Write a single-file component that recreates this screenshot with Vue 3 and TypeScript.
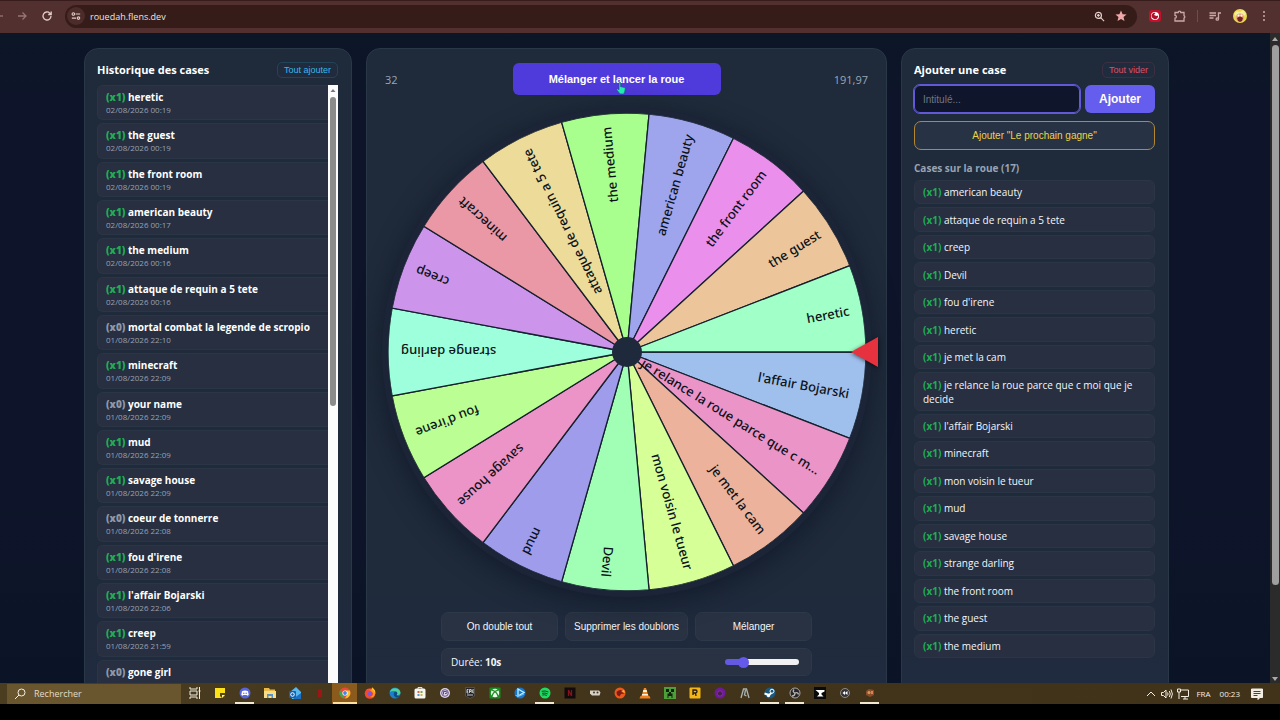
<script setup lang="ts">
import { computed, ref } from 'vue'

interface HistoryEntry { count: number; name: string; date: string }
interface Slice { label: string; color: string }
interface TaskApp { id: string; open?: boolean; active?: boolean }

const history: HistoryEntry[] = [
  { count: 1, name: 'heretic', date: '02/08/2026 00:19' },
  { count: 1, name: 'the guest', date: '02/08/2026 00:19' },
  { count: 1, name: 'the front room', date: '02/08/2026 00:19' },
  { count: 1, name: 'american beauty', date: '02/08/2026 00:17' },
  { count: 1, name: 'the medium', date: '02/08/2026 00:16' },
  { count: 1, name: 'attaque de requin a 5 tete', date: '02/08/2026 00:16' },
  { count: 0, name: 'mortal combat la legende de scropio', date: '01/08/2026 22:10' },
  { count: 1, name: 'minecraft', date: '01/08/2026 22:09' },
  { count: 0, name: 'your name', date: '01/08/2026 22:09' },
  { count: 1, name: 'mud', date: '01/08/2026 22:09' },
  { count: 1, name: 'savage house', date: '01/08/2026 22:09' },
  { count: 0, name: 'coeur de tonnerre', date: '01/08/2026 22:08' },
  { count: 1, name: "fou d'irene", date: '01/08/2026 22:08' },
  { count: 1, name: "l'affair Bojarski", date: '01/08/2026 22:06' },
  { count: 1, name: 'creep', date: '01/08/2026 21:59' },
  { count: 0, name: 'gone girl', date: '29/07/2026 02:24' },
]

const cases: string[] = [
  'american beauty', 'attaque de requin a 5 tete', 'creep', 'Devil', "fou d'irene", 'heretic',
  'je met la cam', 'je relance la roue parce que c moi que je decide', "l'affair Bojarski",
  'minecraft', 'mon voisin le tueur', 'mud', 'savage house', 'strange darling',
  'the front room', 'the guest', 'the medium',
]

const slices: Slice[] = [
  { label: "l'affair Bojarski", color: '#9fbfec' },
  { label: 'je relance la roue parce que c m...', color: '#eb94c8' },
  { label: 'je met la cam', color: '#ecb29b' },
  { label: 'mon voisin le tueur', color: '#d6ff97' },
  { label: 'Devil', color: '#a1ffb5' },
  { label: 'mud', color: '#9f9cec' },
  { label: 'savage house', color: '#ec94c8' },
  { label: "fou d'irene", color: '#bbff94' },
  { label: 'strange darling', color: '#9dffdc' },
  { label: 'creep', color: '#cd94ec' },
  { label: 'minecraft', color: '#ea97a6' },
  { label: 'attaque de requin a 5 tete', color: '#eddb9a' },
  { label: 'the medium', color: '#a9ff8d' },
  { label: 'american beauty', color: '#9ea5ec' },
  { label: 'the front room', color: '#ea8fec' },
  { label: 'the guest', color: '#ecc59b' },
  { label: 'heretic', color: '#a1ffc8' },
]

const R = 239
const step = 360 / slices.length
const point = (deg: number): string => {
  const a = (deg * Math.PI) / 180
  return `${(R * Math.cos(a)).toFixed(2)} ${(R * Math.sin(a)).toFixed(2)}`
}
const wheel = slices.map((s, i) => ({
  ...s,
  d: `M0 0L${point(i * step)}A${R} ${R} 0 0 1 ${point((i + 1) * step)}Z`,
  turn: `rotate(${((i + 0.5) * step).toFixed(2)})`,
}))

const title = ref('')
const duration = ref(10)
const fill = computed(() => `${((duration.value - 5) / 25) * 100}%`)

const apps: TaskApp[] = [
  { id: 'taskview' }, { id: 'notes' }, { id: 'discord', open: true }, { id: 'explorer' },
  { id: 'outlook' }, { id: 'redapp' }, { id: 'chrome', open: true, active: true },
  { id: 'firefox' }, { id: 'edge' }, { id: 'store' }, { id: 'swirl' }, { id: 'epic' },
  { id: 'xbox' }, { id: 'bnet' }, { id: 'spotify', open: true }, { id: 'netflix' },
  { id: 'goggles' }, { id: 'orange' }, { id: 'vlc' }, { id: 'creeper' }, { id: 'rockstar' },
  { id: 'purple' }, { id: 'ark' }, { id: 'steam', open: true }, { id: 'obs', open: true },
  { id: 'anvil' }, { id: 'rewind' }, { id: 'paint', open: true },
]
</script>

<template>
  <div class="screen">
    <header class="browser">
      <svg class="ic nav dim" viewBox="0 0 12 12" aria-hidden="true"><path d="M-4 6h7" /></svg>
      <svg class="ic nav dim fwd" viewBox="0 0 12 12" aria-hidden="true"><path d="M2 6h8M6.500 2.500 10 6 6.500 9.500" /></svg>
      <svg class="ic nav reload" viewBox="0 0 12 12" aria-hidden="true"><path d="M10 6a4 4 0 1 1-1.200-2.900L10 4.300M10.200 1.500v3H7.200" /></svg>
      <div class="omnibox">
        <span class="site"><svg class="ic" viewBox="0 0 12 12" aria-hidden="true"><path d="M5.500 3.500H11M1 8.500h5" /><circle cx="2.800" cy="3.500" r="1.500" /><circle cx="9" cy="8.500" r="1.500" /></svg></span>
        <span class="url">rouedah.flens.dev</span>
        <svg class="ic zoomic" viewBox="0 0 12 12" aria-hidden="true"><circle cx="4.800" cy="4.800" r="3.300" /><path d="M7.300 7.300 11 11M3.300 4.800h3M4.800 3.300v3" /></svg>
        <svg class="ic star" viewBox="0 0 12 12" aria-hidden="true"><path d="M6 .5 7.600 4.200l4 .3-3.100 2.600 1 4L6 9 2.500 11.100l1-4L.4 4.500l4-.3Z" /></svg>
      </div>
      <svg class="ic ext" viewBox="0 0 12 12" aria-hidden="true"><rect width="12" height="12" rx="3" fill="#c3102c" stroke="none" /><circle cx="6" cy="6" r="4" fill="#fff" stroke="none" /><path d="M3 7.500A3 3 0 0 1 6.500 3L5 5l2.500 1L9 5.500A3 3 0 0 1 5 9Z" fill="#b01028" stroke="none" /></svg>
      <svg class="ic puzzle" viewBox="0 0 12 12" aria-hidden="true"><path d="M1 2.500h3.200a1.300 1.300 0 0 1 2.600 0H10v3.200a1.300 1.300 0 0 1 0 2.400V11H1V8.200a1.400 1.400 0 0 0 0-2.800Z" /></svg>
      <span class="sep"></span>
      <svg class="ic media" viewBox="0 0 12 12" aria-hidden="true"><path d="M.5 3h6.500M.5 5.500h6.500M.5 8h4M9.500 9V3H12" /><circle cx="8.300" cy="9" r="1.200" /></svg>
      <svg class="avatar" viewBox="0 0 14 14" aria-hidden="true"><circle cx="7" cy="7" r="7" fill="#ecd94e" /><path d="M1 5 4 2l3 1 3-2 3 4-2 2H3Z" fill="#f5f09b" /><circle cx="7" cy="8.500" r="4" fill="#e5a183" /><path d="M4 9q3-3 6 0l-1 3-2 1-2-1Z" fill="#722220" /><circle cx="5.500" cy="6.500" r="1" fill="#fff" /><circle cx="8.500" cy="6.500" r="1" fill="#fff" /></svg>
      <svg class="kebab" viewBox="0 0 4 12" aria-hidden="true"><circle cx="2" cy="2" r="1" /><circle cx="2" cy="6" r="1" /><circle cx="2" cy="10" r="1" /></svg>
    </header>

    <div class="viewport">
      <main class="page">
        <section class="panel side">
          <div class="head">
            <h2>Historique des cases</h2>
            <button class="mini blue" type="button">Tout ajouter</button>
          </div>
          <div class="history">
            <ul>
              <li v-for="h in history" :key="h.name">
                <span class="name"><b :class="h.count ? 'on' : 'off'">(x{{ h.count }})</b> {{ h.name }}</span>
                <span class="date">{{ h.date }}</span>
              </li>
            </ul>
            <div class="bar light"><svg viewBox="0 0 10 10" aria-hidden="true"><path d="M5 4 7.500 7h-5Z" /></svg><i></i></div>
          </div>
        </section>

        <section class="panel center">
          <div class="top">
            <span>32</span>
            <button class="spin" type="button">Mélanger et lancer la roue
              <svg class="hand" viewBox="0 0 11 14" aria-hidden="true"><path d="M3.500.5Q4.800 0 5 1v4.500l4.300 1q1 .3.900 1.500L9.500 11 8.500 13.500h-4L1 9.300Q.2 8 1.300 7.700L3.300 9Z" /></svg>
            </button>
            <span>191,97</span>
          </div>
          <div class="wheelbox">
            <svg class="wheel" viewBox="-239 -239 478 478" role="img" aria-label="Roue">
              <path v-for="s in wheel" :key="s.label" :d="s.d" :fill="s.color" class="slice" />
              <text v-for="s in wheel" :key="s.label" :transform="s.turn" x="226" y="5" text-anchor="end">{{ s.label }}</text>
              <circle r="15" class="hub" />
            </svg>
            <svg class="pointer" viewBox="0 0 27 30" aria-hidden="true"><path d="M0 15 27 0v30Z" /></svg>
          </div>
          <div class="controls">
            <div class="row">
              <button type="button">On double tout</button>
              <button type="button">Supprimer les doublons</button>
              <button type="button">Mélanger</button>
            </div>
            <div class="duration">
              <label for="duration">Durée: <b>{{ duration }}s</b></label>
              <input id="duration" v-model.number="duration" type="range" min="5" max="30" :style="{ '--fill': fill }" />
            </div>
          </div>
        </section>

        <section class="panel side">
          <div class="head">
            <h2>Ajouter une case</h2>
            <button class="mini red" type="button">Tout vider</button>
          </div>
          <form class="add" @submit.prevent>
            <input v-model="title" type="text" aria-label="Intitulé" placeholder="Intitulé..." />
            <button type="submit">Ajouter</button>
          </form>
          <button class="next" type="button">Ajouter "Le prochain gagne"</button>
          <h3>Cases sur la roue (17)</h3>
          <ul class="cases">
            <li v-for="c in cases" :key="c"><span><b class="on">(x1)</b> {{ c }}</span></li>
          </ul>
        </section>
      </main>
      <div class="bar dark"><svg viewBox="0 0 10 10" aria-hidden="true"><path d="M5 4 8 8H2Z" /></svg><i></i><svg viewBox="0 0 10 10" aria-hidden="true"><path d="M5 8 8 4H2Z" /></svg></div>
    </div>

    <footer class="taskbar">
      <label class="search">
        <svg viewBox="0 0 12 12" aria-hidden="true"><circle cx="7.500" cy="4.500" r="3.500" /><path d="M5 7 1 11" /></svg>
        <input type="text" aria-label="Rechercher" placeholder="Rechercher" />
      </label>
      <div class="apps">
        <span v-for="a in apps" :key="a.id" class="app" :class="{ open: a.open, active: a.active }">
          <svg viewBox="0 0 12 12" aria-hidden="true">
            <g v-if="a.id === 'taskview'" fill="none" stroke="#f1ecdf"><path d="M1 0v2h7V0M1 12v-2h7v2M1 4h7v4H1ZM10.500 0v12M9.500 4h2" /></g>
            <g v-else-if="a.id === 'notes'"><path d="M1 1h10v10H1Z" fill="#fbe116" /><path d="M6 6h5v5H8L6 9Z" fill="#564813" /><path d="M8 11V8h3Z" fill="#fff38a" /></g>
            <g v-else-if="a.id === 'discord'"><circle cx="6" cy="6" r="5.500" fill="#5865dc" /><path d="M3 4.200Q6 3 9 4.200L9.700 8 8.300 8.800 7.500 8h-3l-.8.8L2.300 8Z" fill="#fff" /><circle cx="4.800" cy="6.300" r=".7" fill="#5865dc" /><circle cx="7.200" cy="6.300" r=".7" fill="#5865dc" /></g>
            <g v-else-if="a.id === 'explorer'"><path d="M0 1h5l1 1.500h5V11H0Z" fill="#e9b94a" /><path d="M0 4h12v7H0Z" fill="#f8dc88" /><path d="M3 11V7h6v4H7.500V9h-3v2Z" fill="#5593c8" /></g>
            <g v-else-if="a.id === 'outlook'"><path d="M1 5 7 0l5 5v7H3Z" fill="#58b7ee" /><path d="M4 12 12 6v6Z" fill="#1d6fc4" /><rect y="4" width="7" height="7" rx="1" fill="#1162b5" /><circle cx="3.500" cy="7.500" r="1.800" fill="none" stroke="#fff" /></g>
            <path v-else-if="a.id === 'redapp'" d="M4 2.500 8 2v8H4Z" fill="#9c1713" />
            <g v-else-if="a.id === 'chrome'"><circle cx="6" cy="6" r="5.500" fill="#e8493a" /><path d="M1.200 3.300 4 8l2 3.500A5.500 5.500 0 0 1 1.200 3.300Z" fill="#37a853" /><path d="M6 3.500h4.800A5.500 5.500 0 0 1 6 11.500L8 8Z" fill="#f9c32c" /><circle cx="6" cy="6" r="2.600" fill="#fff" /><circle cx="6" cy="6" r="1.900" fill="#4285e8" /></g>
            <g v-else-if="a.id === 'firefox'"><circle cx="6" cy="6.500" r="5.300" fill="#f3472f" /><path d="M8 .3Q12 3 11.300 7 10 4 7.500 3.500Z" fill="#ffc530" /><path d="M2 3Q6 2 9 6 9.500 9 6 10 11 11 11 6 10 3 8 2.500Z" fill="#ff9722" /><circle cx="6" cy="6.800" r="2.200" fill="#8055db" /></g>
            <g v-else-if="a.id === 'edge'"><circle cx="6" cy="6" r="5.500" fill="#1b80cc" /><path d="M.8 5A5.500 5.500 0 0 1 11.500 6Q11 8.500 8 8 8 4 5 4 2.500 4 .8 5Z" fill="#4fd29a" /><path d="M7 4.500Q9.500 6 7.500 8 9 9.500 11 8.500 8 13 5 8.500 4 5 7 4.500Z" fill="#104a84" /></g>
            <g v-else-if="a.id === 'store'"><path d="M4 2V.5h4V2" fill="none" stroke="#ddd" /><rect x=".5" y="1.500" width="11" height="10" rx="1.500" fill="#f5f5f2" /><path d="M3.500 4h2v2h-2Z" fill="#df6147" /><path d="M6.500 4h2v2h-2Z" fill="#78a942" /><path d="M3.500 7h2v2h-2Z" fill="#4a9cd2" /><path d="M6.500 7h2v2h-2Z" fill="#e3ae38" /></g>
            <g v-else-if="a.id === 'swirl'"><circle cx="6" cy="6" r="5" fill="#ddd3e9" /><circle cx="6" cy="6" r="3.300" fill="none" stroke="#65598c" /><path d="M4.500 7.500V4.500H7a1 1 0 0 1 0 2H6" fill="none" stroke="#674477" /></g>
            <g v-else-if="a.id === 'epic'"><path d="M1.500.5h9V9L6 11.500 1.500 9Z" fill="#242327" stroke="#77706d" stroke-width=".5" /><path d="M3 2.500v3.500M3 2.500h1.500M3 4.200h1.200M3 6h1.500M5.500 6V2.500H7v2H5.500M8 2.500V6M9.500 2.500H9V6h.7M3 8h6" fill="none" stroke="#eee" stroke-width=".8" /></g>
            <g v-else-if="a.id === 'xbox'"><rect x=".5" y=".5" width="11" height="11" rx="1" fill="#168b22" /><circle cx="6" cy="6" r="4.200" fill="#eef7ea" /><path d="M3 9Q4 6 6 4.500 8 6 9 9M3 3l3 1.500L9 3" fill="none" stroke="#168b22" stroke-width="1.200" /></g>
            <g v-else-if="a.id === 'bnet'"><circle cx="6" cy="6" r="5.500" fill="#1877cc" /><path d="M4 2 10 5.500 4 9Z" fill="none" stroke="#bbf4ff" stroke-width="1.300" /><path d="M1.500 8.500Q6 10 10 7" fill="none" stroke="#6bc6f7" /></g>
            <g v-else-if="a.id === 'spotify'"><circle cx="6" cy="6" r="5.500" fill="#1edc62" /><path d="M2.700 4.300q3.500-1 6.700.7M3 6.300q3-.8 5.700.6M3.300 8q2.500-.6 4.600.5" fill="none" stroke="#174625" /></g>
            <g v-else-if="a.id === 'netflix'"><path d="M.5.5h11v11H.5Z" fill="#120b0b" /><path d="M4.500 9V3l3 6V3" fill="none" stroke="#84131d" stroke-width="1.300" /></g>
            <g v-else-if="a.id === 'goggles'"><path d="M1 3.500h9l1.500 2-1 3H3L1 6.500Z" fill="#d6d0c5" /><circle cx="5" cy="5.500" r="1" fill="#403a36" /><circle cx="8.500" cy="5.500" r="1" fill="#403a36" /></g>
            <g v-else-if="a.id === 'orange'"><circle cx="6" cy="6" r="5.500" fill="#ed591c" /><path d="M2.500 5Q6 1.500 9.500 4L7.500 5l3 1.500-3.500.5L5.500 9.500 3 8Z" fill="#7e1d18" /><path d="M7 4l3-1 1 3Z" fill="#ffb432" /></g>
            <g v-else-if="a.id === 'vlc'"><path d="M5 1h2l2.500 8h-7Z" fill="#f48a25" /><path d="M4.400 3h3.200l.6 2H3.800ZM3.300 7h5.400l.5 1.500H2.800Z" fill="#fff2dc" /><path d="M1.500 9h9l1 2.500H.5Z" fill="#ef801d" /></g>
            <g v-else-if="a.id === 'creeper'"><path d="M0 0h12v12H0Z" fill="#4c9f3a" /><path d="M2 2h3v3H2ZM7 2h3v3H7ZM5 5h2v1.500h1.500V11H7.500V9h-3v2h-1V6.500H5Z" fill="#12200e" /></g>
            <g v-else-if="a.id === 'rockstar'"><rect x=".5" y=".5" width="11" height="11" rx="1" fill="#f4b616" /><path d="M4 8V3h2.500a1.500 1.500 0 0 1 0 3H4M6.500 6l.5 3" fill="none" stroke="#211b0f" stroke-width="1.300" /></g>
            <g v-else-if="a.id === 'purple'"><circle cx="6" cy="6" r="5.500" fill="#6d1b97" /><circle cx="6" cy="6.500" r="2.600" fill="#471d4d" stroke="#852aa5" /></g>
            <path v-else-if="a.id === 'ark'" d="M2 11 4.500 2h3L10 11M6.500 3 5.500 8l2 1" fill="none" stroke="#a7b3b5" stroke-width="1.300" />
            <g v-else-if="a.id === 'steam'"><circle cx="6" cy="6" r="5.500" fill="#1a587d" /><path d="M.5 6.500 5 8l3-2.500" stroke="#fff" stroke-width="2" fill="none" /><circle cx="8" cy="4.200" r="2" fill="#1a587d" stroke="#fff" /><circle cx="4.500" cy="8.500" r="1.700" fill="#fff" /></g>
            <g v-else-if="a.id === 'obs'"><circle cx="6" cy="6" r="5" fill="#25252a" stroke="#aaa6a2" /><path d="M6 6Q3 5 5 2.500M6 6q3-1 3.500 1.500M6 6q0 3-3 3" fill="none" stroke="#bab5b1" stroke-width="1.300" /></g>
            <g v-else-if="a.id === 'anvil'"><path d="M0 0h12v12H0Z" fill="#0b0a0b" /><path d="M1.500 3h9v1.500L7.500 6v1.500l2 2H3l2-2V6Z" fill="#fff" /></g>
            <g v-else-if="a.id === 'rewind'"><circle cx="6" cy="6" r="4.500" fill="#343438" stroke="#a4a09d" stroke-width=".8" /><path d="M3.500 6 6 4v4ZM6 6l2.500-2v4Z" fill="#fff" /></g>
            <g v-else><path d="M2 4 5 2l5 1v5L6 10 2 8Z" fill="#8d4c28" /><circle cx="5" cy="5.500" r="1.500" fill="#d29a67" /><path d="M7 4h2v3H7Z" fill="#df8148" /></g>
          </svg>
        </span>
      </div>
      <div class="tray">
        <svg viewBox="0 0 12 12" aria-hidden="true"><path d="M2 8l4-4 4 4" /></svg>
        <svg viewBox="0 0 12 12" aria-hidden="true"><path d="M.5 4.500H2.500L5 2v8L2.500 7.500h-2ZM6.500 4.500q1.200 1.500 0 3M8.300 3q2 3 0 6M10 1.500q2.800 4.500 0 9" /></svg>
        <svg viewBox="0 0 12 12" aria-hidden="true"><path d="M3.500 2h8v6.500H4M6 11h5M8 8.500V11M.5 1h3v3h-3ZM2 4v7" /></svg>
        <span>FRA</span>
        <span class="clock">00:23</span>
        <svg viewBox="0 0 12 12" aria-hidden="true"><path d="M.5 1h11v8.500H9l-2 2V9.500H.5Z" fill="#f2eee4" /><path d="M2.500 3.500h7M2.500 5.500h7M2.500 7.500h4" stroke="#51431f" /></svg>
      </div>
    </footer>
  </div>
</template>

<style>
html, body { margin: 0; background: #000; }
</style>

<style scoped>
* { box-sizing: border-box; }
.screen { height: 100vh; display: flex; flex-direction: column; padding-bottom: 16px; overflow: hidden; background: #000; color: #f4f6fa; font: 11px/15px "Open Sans", "Noto Sans", sans-serif; }
button, input { font-family: "Liberation Sans", Arial, sans-serif; margin: 0; }
h2, h3, ul { margin: 0; padding: 0; }
ul { list-style: none; }

.browser { flex: none; height: 33px; display: flex; align-items: center; background: #52302f; border-top: 1px solid #381c1b; padding: 0 14px 2px 0; }
.ic { width: 12px; height: 12px; flex: none; fill: none; stroke: #e3cdca; stroke-width: 1.3; overflow: visible; }
.dim { stroke: #957573; }
.fwd { margin-left: 4px; }
.reload { margin-left: 13px; }
.omnibox { flex: 1; height: 23px; margin-left: 12px; border-radius: 12px; background: #351c19; display: flex; align-items: center; padding: 0 10px 0 2px; }
.site { width: 18px; height: 18px; border-radius: 9px; background: #4b2c2a; display: grid; place-items: center; }
.site .ic { width: 10px; height: 10px; }
.url { flex: 1; margin-left: 5px; color: #efe2e0; font-size: 9px; }
.zoomic { width: 11px; height: 11px; margin-right: 10px; }
.star { fill: #f0a9ab; stroke: none; }
.ext { margin-left: 12px; }
.puzzle { margin-left: 13px; stroke: #c9aaa7; }
.sep { width: 1px; height: 12px; margin: 0 11px; background: #714c4a; }
.avatar { width: 14px; height: 14px; margin: 0 15px 0 12px; }
.media { stroke: #c9aaa7; }
.kebab { width: 4px; height: 12px; fill: #c9aaa7; }

.viewport { flex: 1; min-height: 0; display: flex; overflow: hidden; background: linear-gradient(#0b1626, #0e152a 60px, #0e152a 70%, #0b1427); }
.page { flex: 1; display: grid; grid-template-columns: 268px minmax(0, 1fr) 268px; gap: 14px; align-self: flex-start; padding: 15px 101px 0 84px; }
.panel { border: 1px solid #2a3747; border-radius: 14px; background: linear-gradient(#1f2b3a, #1f2a3b 80%, #1f2b3f); }
.side { padding: 13px 13px 0 12px; }
.head { display: flex; align-items: center; justify-content: space-between; height: 16px; margin-bottom: 7px; }
h2 { font-size: 11px; line-height: 16px; color: #fff; }
.mini { height: 16px; padding: 0 6px; border: 1px solid #224459; border-radius: 5px; background: #202c3d; font-size: 9px; line-height: 13px; }
.blue { color: #38b6ee; }
.red { color: #e04c63; border-color: #3d2f42; }
.on { color: #20ad55; }
.off { color: #8d98a8; }

.history { display: flex; }
.history ul { flex: 1; min-width: 0; height: 610px; display: grid; grid-auto-rows: 1fr; gap: 3px; }
.history li { display: flex; flex-direction: column; padding: 5px 9px 0 8px; border: 1px solid #2a3546; border-right: 0; border-radius: 6px 0 0 6px; background: #272f40; white-space: nowrap; }
.name { font-size: 10px; line-height: 13px; font-weight: 700; color: #fff; }
.date { font-size: 8px; line-height: 11px; color: #97a2b4; }
.bar { width: 10px; flex: none; display: flex; flex-direction: column; align-items: center; }
.bar svg { width: 10px; height: 10px; flex: none; }
.bar i { width: 6px; border-radius: 3px; }
.light { background: #fcfcfc; }
.light svg { fill: #777; }
.light i { height: 309px; margin-top: 2px; background: #8b8b8b; }
.dark { background: #2b2b2b; }
.dark svg { fill: #aaa; }
.dark i { width: 7px; height: 83%; margin: 2px 0 auto; background: #9f9f9f; border-radius: 4px; }

.center { display: flex; flex-direction: column; align-items: center; padding: 14px 18px 0; }
.top { align-self: stretch; height: 32px; display: flex; justify-content: space-between; align-items: center; color: #9aa6b7; }
.top span { flex: 1; font-size: 11px; }
.top span:last-child { text-align: right; }
.spin { position: relative; width: 208px; height: 32px; margin-right: 20px; border: 0; border-radius: 6px; background: #4f3adb; color: #fff; font-size: 11px; font-weight: 700; white-space: nowrap; }
.hand { position: absolute; left: 103px; top: 18px; width: 10px; height: 14px; fill: #24efb4; stroke: #155d72; stroke-width: .6; }
.wheelbox { position: relative; margin-top: 18px; width: 478px; }
.wheel { display: block; width: 100%; border-radius: 50%; box-shadow: 0 0 0 6px #1b2537, 0 6px 24px 8px rgba(10, 18, 32, .55); }
.slice { stroke: #15202d; stroke-width: 1.3; }
.wheel text { font: 500 13px "Noto Sans", "Open Sans", sans-serif; fill: #0c1218; }
.hub { fill: #1e2a3b; }
.pointer { position: absolute; right: -12px; top: 224px; width: 27px; height: 30px; fill: #e6323f; filter: drop-shadow(0 1px 2px rgba(0, 0, 0, .6)); }
.controls { width: 371px; margin-top: 21px; display: grid; gap: 7px; }
.row { display: flex; gap: 7px; }
.row button { flex: 1; height: 29px; padding: 0 8px; border: 1px solid #2d3848; border-radius: 7px; background: #283242; color: #f3f5f8; font-size: 10px; white-space: nowrap; }
.duration { height: 28px; display: flex; align-items: center; justify-content: space-between; padding: 0 12px 0 9px; border: 1px solid #2d3848; border-radius: 7px; background: #283242; font-size: 10px; }
.duration input { appearance: none; width: 74px; height: 6px; border-radius: 3px; background: linear-gradient(90deg, #6459e2 var(--fill), #f0f0f2 var(--fill)); }
.duration input::-webkit-slider-thumb { appearance: none; width: 11px; height: 11px; border-radius: 50%; background: #6459e8; }

.add { display: flex; gap: 5px; height: 28px; }
.add input { flex: 1; min-width: 0; padding: 0 8px; border: 1px solid #6159d5; border-radius: 6px; outline: 1px solid #6159d5; background: #0f152a; color: #fff; font-size: 10px; }
.add input::placeholder { color: #6f7582; }
.add button { width: 70px; border: 0; border-radius: 6px; background: #655dee; color: #fff; font-size: 12px; font-weight: 700; }
.next { display: block; width: 100%; height: 29px; margin: 8px 0 12px; border: 1px solid #b48731; border-radius: 7px; background: #273244; color: #edd345; font-size: 10px; }
h3 { height: 12px; margin-bottom: 6px; font-size: 10px; line-height: 12px; color: #98a3b4; }
.cases { height: 478px; margin-bottom: 20px; display: flex; flex-direction: column; gap: 3px; font-size: 10px; line-height: 14px; }
.cases li { flex: 1 0 auto; display: flex; align-items: center; padding: 4px 8px; border: 1px solid #2a3546; border-radius: 6px; background: #272f40; }

.taskbar { flex: none; height: 21px; display: flex; align-items: center; padding-left: 7px; background: linear-gradient(90deg, #4b3d20, #42341a 50%, #40331a); color: #f2eee4; }
.search { width: 174px; height: 20px; display: flex; align-items: center; padding-left: 7px; background: #69562f; }
.search svg { width: 12px; height: 12px; fill: none; stroke: #f2eee4; }
.search input { width: 120px; margin-left: 8px; padding: 0; border: 0; outline: 0; background: none; color: #fff; font: 9px "Open Sans", sans-serif; }
.search input::placeholder { color: #e4dbc6; }
.apps { display: flex; height: 21px; margin-left: 1px; }
.app { width: 25px; display: grid; place-items: center; border-bottom: 2px solid transparent; background-clip: padding-box; }
.app svg { width: 12px; height: 12px; display: block; }
.open { background: linear-gradient(#f1e8cf, #f1e8cf) center bottom / 19px 2px no-repeat border-box; }
.active { background: linear-gradient(#ffdf9c, #ffdf9c) center bottom / 24px 2px no-repeat border-box, #8a5b1c; }
.tray { margin-left: auto; display: flex; align-items: center; gap: 4px; padding-right: 17px; font-size: 8px; }
.tray svg { width: 12px; height: 12px; fill: none; stroke: #f2eee4; }
.tray span { margin-left: 3px; }
.clock { padding: 0 7px 0 2px; }
</style>
